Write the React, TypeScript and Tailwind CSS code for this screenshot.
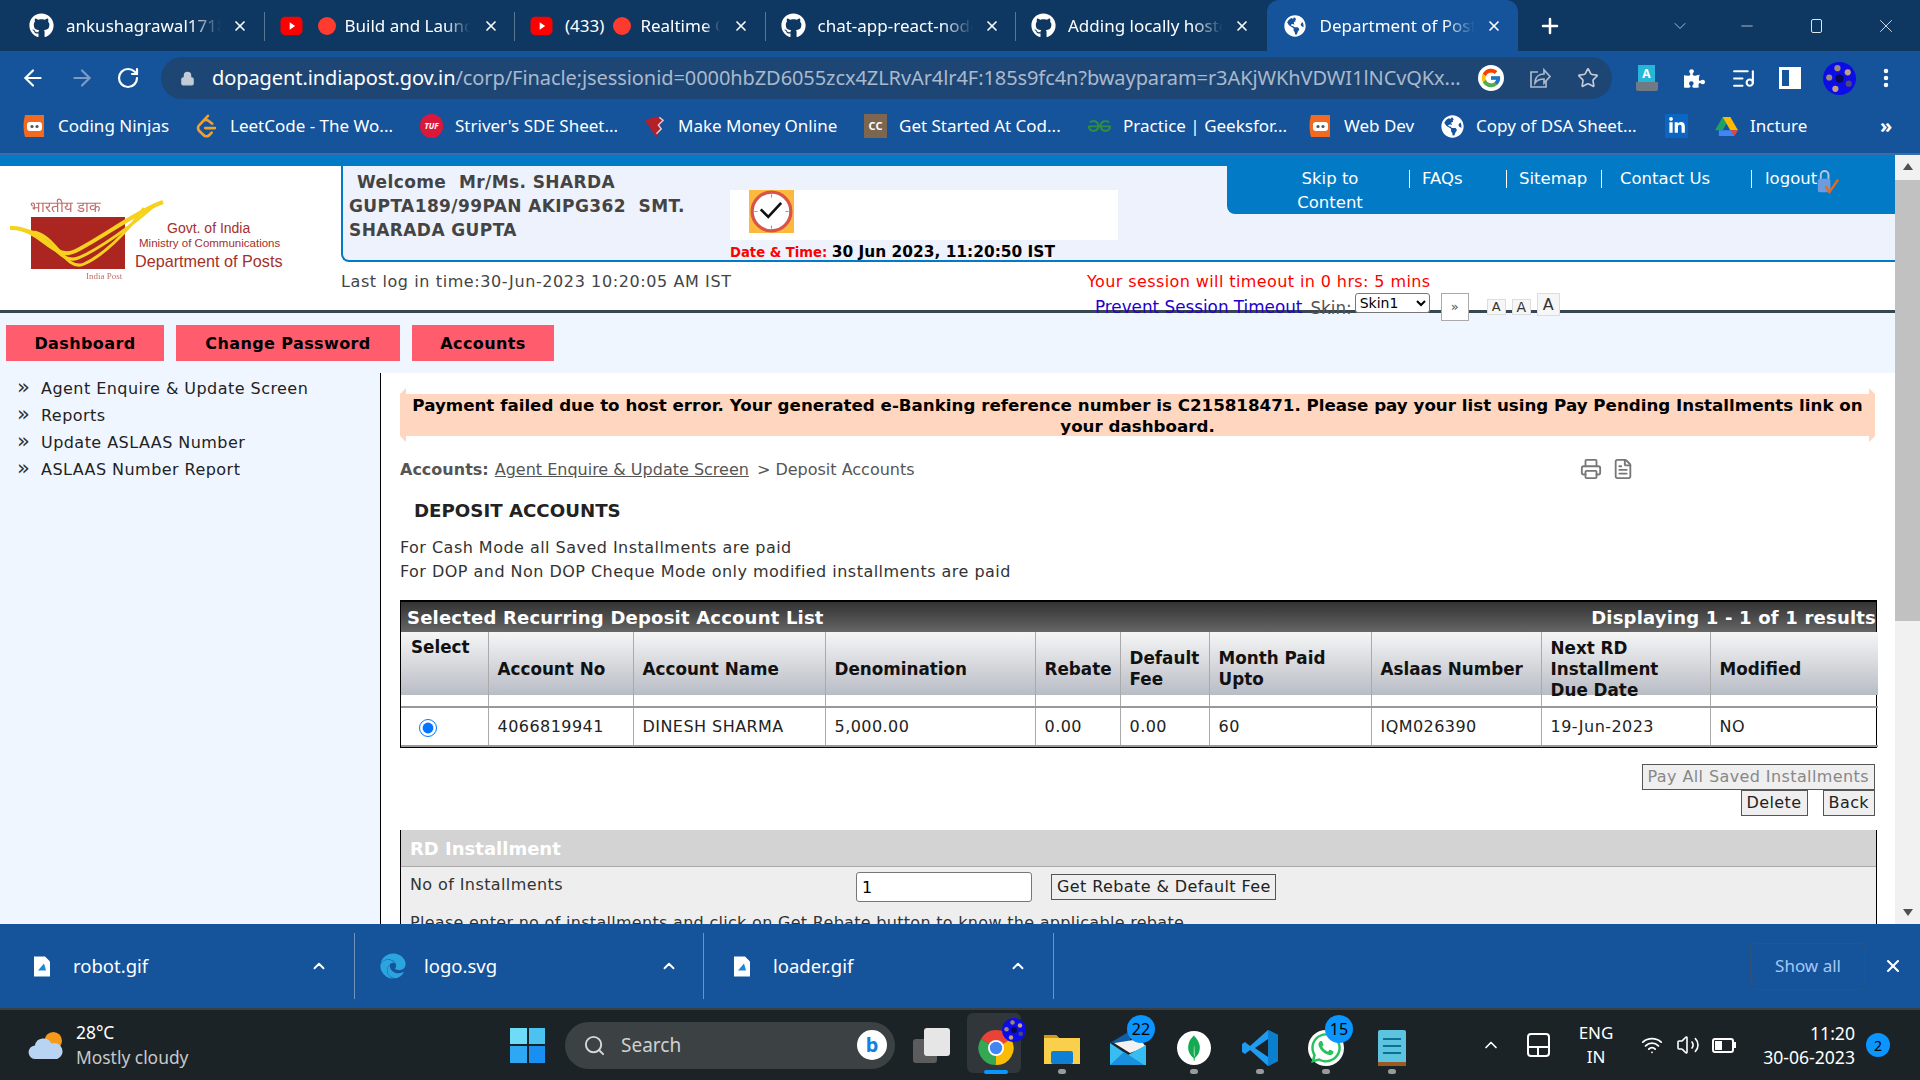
import type { ReactNode } from 'react';
import {
  ArrowLeft,
  ArrowRight,
  ChevronDown,
  ChevronUp,
  EllipsisVertical,
  FileText,
  ListMusic,
  Lock,
  Minus,
  Plus,
  Printer,
  RotateCw,
  Search,
  Star,
  Volume2,
  Wifi,
  X,
} from 'lucide-react';
import { FaEdge, FaGithub, FaGlobeAmericas, FaLinkedinIn, FaPuzzlePiece, FaWhatsapp } from 'react-icons/fa';
import { FcGoogle } from 'react-icons/fc';
import { SiGeeksforgeeks, SiLeetcode, SiMongodb } from 'react-icons/si';

const YouTubeIcon = () => (
  <svg viewBox="0 0 24 24" className="h-[22px] w-[23px] shrink-0">
    <rect x="0" y="2" width="24" height="20" rx="5" fill="#f00" />
    <path d="M10 8l6 4-6 4z" fill="#fff" />
  </svg>
);

const NinjaIcon = () => (
  <svg viewBox="0 0 24 24" className="h-[26px] w-[24px]">
    <path d="M3 1h19v22H3q-3-11 0-22z" fill="#f26a21" />
    <rect x="5" y="8" width="15" height="9" rx="3" fill="#fff" />
    <circle cx="10" cy="12.5" r="1.6" fill="#555" />
    <circle cx="15" cy="12.5" r="1.6" fill="#555" />
  </svg>
);

const DriveIcon = () => (
  <svg viewBox="0 0 24 22" className="h-[21px] w-[23px]">
    <path d="M8 1h8l-8 14H0z" fill="#1ea362" />
    <path d="M8 1h8l8 14h-8z" fill="#ffba00" />
    <path d="M4 15h20l-4 6H4z" fill="#4285f4" />
    <path d="M16 15h8l-4 6z" fill="#ea4335" />
  </svg>
);

const Avatar = ({ size }: { size: string }) => (
  <svg viewBox="0 0 32 32" className={size}>
    <circle cx="16" cy="16" r="16" fill="#0c0ce6" />
    <circle cx="16" cy="16" r="4" fill="#0a0a50" />
    <circle cx="14" cy="6" r="3" fill="#a08878" />
    <circle cx="24" cy="10" r="3" fill="#c0a080" />
    <circle cx="6" cy="15" r="3" fill="#a08878" />
    <circle cx="25" cy="21" r="3" fill="#504870" />
    <circle cx="12" cy="26" r="3" fill="#c0a080" />
  </svg>
);

const ShareIcon = () => (
  <svg viewBox="0 0 24 24" fill="none" stroke="#aab9cb" strokeWidth="1.7" className="ml-[24px] h-[24px] w-[24px] shrink-0">
    <path d="M10 6H3v15h15v-6" />
    <path d="M7 17c0-6 4-9 9-9V4l6 6.5-6 6.5v-4c-4 0-7 1-9 4z" />
  </svg>
);

const tabs = [
  { title: 'ankushagrawal1718', icon: 'github' },
  { title: 'Build and Launch', icon: 'yt', dot: true },
  { title: 'Realtime Chat', icon: 'yt', count: '(433)', dot: true },
  { title: 'chat-app-react-node', icon: 'github' },
  { title: 'Adding locally hosted', icon: 'github' },
];

const bookmarks: { name: string; w: string; icon: ReactNode }[] = [
  { name: 'Coding Ninjas', w: 'w-[173px]', icon: <NinjaIcon /> },
  { name: 'LeetCode - The Wo...', w: 'w-[225px]', icon: <SiLeetcode className="h-[24px] w-[23px] text-[#f0a030]" /> },
  {
    name: "Striver's SDE Sheet...",
    w: 'w-[223px]',
    icon: (
      <span className="flex h-[24px] w-[23px] items-center justify-center rounded-full bg-[#d9183b] text-[8px] font-bold italic text-white">
        TUF
      </span>
    ),
  },
  {
    name: 'Make Money Online',
    w: 'w-[221px]',
    icon: (
      <svg viewBox="0 0 24 24" className="h-[24px] w-[23px]">
        <path d="M2 6l12-4 6 2-6 20z" fill="#b3202a" />
        <path d="M17 3l4 3-5 5 3 4-5 5" fill="none" stroke="#f3c5c5" strokeWidth="1.5" />
      </svg>
    ),
  },
  {
    name: 'Get Started At Cod...',
    w: 'w-[224px]',
    icon: (
      <span className="flex h-[24px] w-[23px] items-center justify-center bg-[#7c6650] text-[11px] font-bold text-white">
        CC
      </span>
    ),
  },
  { name: 'Practice | Geeksfor...', w: 'w-[220px]', icon: <SiGeeksforgeeks className="h-[24px] w-[23px] text-[#2f8d46]" /> },
  { name: 'Web Dev', w: 'w-[133px]', icon: <NinjaIcon /> },
  { name: 'Copy of DSA Sheet...', w: 'w-[224px]', icon: <FaGlobeAmericas className="h-[23px] w-[23px] text-white" /> },
  {
    name: '',
    w: 'w-[50px]',
    icon: (
      <span className="flex h-[24px] w-[23px] items-center justify-center bg-[#0a66c2] text-white">
        <FaLinkedinIn className="h-[18px] w-[18px]" />
      </span>
    ),
  },
  { name: 'Incture', w: 'w-[90px]', icon: <DriveIcon /> },
];

const TabStrip = () => (
  <div className="flex h-[51px] shrink-0 items-end bg-[#0e3761] pl-[14px] text-white">
    {tabs.map((tab, i) => (
      <div key={tab.title} className="relative flex h-[51px] w-[250.5px] items-center pl-[15px]">
        {tab.icon === 'github' ? <FaGithub className="h-[25px] w-[25px] shrink-0" /> : <YouTubeIcon />}
        {tab.count && <span className="ml-[12px] text-[17px]">{tab.count}</span>}
        {tab.dot && <span className={`h-[18px] w-[18px] shrink-0 rounded-full bg-[#ff3b30] ${tab.count ? 'ml-[9px]' : 'ml-[15px]'}`} />}
        <span
          className={`${tab.dot ? 'ml-[9px]' : 'ml-[12px]'} overflow-hidden whitespace-nowrap text-[17px] [mask-image:linear-gradient(to_right,black_80%,transparent)] ${
            tab.count ? 'w-[80px]' : tab.dot ? 'w-[125px]' : 'w-[155px]'
          }`}
        >
          {tab.title}
        </span>
        <X className="absolute left-[218px] h-[16px] w-[16px]" strokeWidth={2.5} />
        {i < tabs.length - 1 && <span className="absolute right-0 top-[12px] h-[29px] w-px bg-[#5a7690]" />}
      </div>
    ))}
    <div className="relative flex h-[51px] w-[251px] items-center rounded-t-[12px] bg-[#15539b] pl-[17px]">
      <FaGlobeAmericas className="h-[22px] w-[22px] shrink-0" />
      <span className="ml-[14px] w-[155px] overflow-hidden whitespace-nowrap text-[17px] [mask-image:linear-gradient(to_right,black_80%,transparent)]">
        Department of Posts
      </span>
      <X className="absolute left-[219px] h-[16px] w-[16px]" strokeWidth={2.5} />
    </div>
    <div className="flex h-[51px] flex-1 items-center">
      <Plus className="ml-[20px] h-[24px] w-[24px]" strokeWidth={2.5} />
      <ChevronDown className="ml-[108px] h-[20px] w-[20px] text-[#c9d4e2]" strokeWidth={1} />
      <Minus className="ml-[48px] h-[18px] w-[18px] text-[#dfe6ee]" strokeWidth={1} />
      <span className="relative ml-[55px] h-[14px] w-[11px] rounded-[2px] border border-[#dfe6ee]" />
      <X className="ml-[53px] h-[22px] w-[22px] text-[#dfe6ee]" strokeWidth={1} />
    </div>
  </div>
);

const Toolbar = () => (
  <div className="flex h-[54px] shrink-0 items-center bg-[#15539b] text-white">
    <ArrowLeft className="ml-[20px] h-[26px] w-[26px]" strokeWidth={2} />
    <ArrowRight className="ml-[23px] h-[26px] w-[26px] text-[#7d9cc4]" strokeWidth={2} />
    <RotateCw className="ml-[21px] h-[24px] w-[24px]" strokeWidth={2.2} />
    <div className="ml-[21px] flex h-[42px] w-[1451px] items-center rounded-full bg-[#1e4675] pl-[19px]">
      <Lock className="h-[15px] w-[15px] text-[#c2cbd6]" fill="#c2cbd6" />
      <div className="ml-[17px] w-[1250px] overflow-hidden whitespace-nowrap text-[20px] tracking-[-0.08px] text-[#aab9cb]">
        <span className="text-white">dopagent.indiapost.gov.in</span>
        /corp/Finacle;jsessionid=0000hbZD6055zcx4ZLRvAr4lr4F:185s9fc4n?bwayparam=r3AKjWKhVDWI1lNCvQKx...
      </div>
      <span className="ml-[16px] flex h-[26px] w-[26px] shrink-0 items-center justify-center rounded-full bg-white">
        <FcGoogle className="h-[22px] w-[22px]" />
      </span>
      <ShareIcon />
      <Star className="ml-[25px] h-[22px] w-[22px] shrink-0 text-[#c2cbd6]" strokeWidth={1.8} />
    </div>
    <div className="ml-[23px] flex h-[26px] w-[23px] flex-col items-center">
      <span className="flex h-[17px] w-[17px] items-center justify-center bg-[#26b6d8] text-[12px] font-bold leading-none text-white">A</span>
      <span className="h-[9px] w-[22px] rounded-b-[2px] bg-[#6f7a85]" />
    </div>
    <FaPuzzlePiece className="ml-[26px] h-[21px] w-[21px]" />
    <ListMusic className="ml-[26px] h-[25px] w-[25px]" strokeWidth={2} />
    <span className="ml-[23px] flex h-[22px] w-[22px] justify-end border-[3px] border-white">
      <span className="h-full w-[9px] bg-white" />
    </span>
    <span className="ml-[22px]">
      <Avatar size="h-[33px] w-[33px]" />
    </span>
    <EllipsisVertical className="ml-[18px] h-[24px] w-[24px]" strokeWidth={2.5} />
  </div>
);

const BookmarksBar = () => (
  <div className="flex h-[50px] shrink-0 items-center border-b-2 border-[#3a6ea8] bg-[#15539b] pb-[6px] pl-[22px] text-[17px] text-white">
    {bookmarks.map(bm => (
      <div key={bm.w + bm.name} className={`flex shrink-0 items-center ${bm.w}`}>
        <span className="mr-[12px] flex shrink-0">{bm.icon}</span>
        {bm.name && <span className="whitespace-nowrap">{bm.name}</span>}
      </div>
    ))}
    <span className="ml-[75px] text-[20px] font-bold leading-none">»</span>
  </div>
);

const IndiaPostLogo = () => (
  <div className="relative h-full w-[341px] shrink-0 bg-white font-['Liberation_Sans',sans-serif] text-[#a5302a]">
    <span className="absolute left-[30px] top-[33px] text-[15px] leading-none opacity-70">भारतीय डाक</span>
    <svg viewBox="0 0 170 90" className="absolute left-[8px] top-[34px] h-[90px] w-[170px]">
      <rect x="23" y="17" width="94" height="52" fill="#ab2620" />
      <path d="M2 28C30 26 45 60 65 52S130 10 155 2" fill="none" stroke="#f6d21f" strokeWidth="4" />
      <path d="M14 30C40 30 50 66 70 58S125 25 148 4" fill="none" stroke="#f6d21f" strokeWidth="3" />
      <path d="M26 32C48 36 58 72 76 64S118 34 136 8" fill="none" stroke="#f6d21f" strokeWidth="3" />
    </svg>
    <span className="absolute left-[167px] top-[55px] text-[14px] leading-none">Govt. of India</span>
    <span className="absolute left-[139px] top-[72px] whitespace-nowrap text-[11.5px] leading-none">Ministry of Communications</span>
    <span className="absolute left-[135px] top-[87px] whitespace-nowrap text-[16.2px] leading-none">Department of Posts</span>
    <span className="absolute left-[86px] top-[106px] font-['Liberation_Serif',serif] text-[9px] leading-none opacity-70">India Post</span>
  </div>
);

const ClockIcon = () => (
  <div className="flex h-[43px] w-[45px] items-center justify-center bg-[#fdb93d]">
    <svg viewBox="0 0 40 40" className="h-[43px] w-[43px]">
      <circle cx="20" cy="20" r="18" fill="#fff" stroke="#d9534a" strokeWidth="3" />
      <path d="M10 18l7 7L29 12" fill="none" stroke="#111" strokeWidth="2.5" />
      <path d="M20 4v3M20 33v3M4 20h3M33 20h3" stroke="#999" strokeWidth="1" />
    </svg>
  </div>
);

const BlueTabLinks = () => (
  <div className="absolute right-0 top-0 flex h-[48px] w-[668px] items-start rounded-bl-lg bg-[#037ac6] pl-[63px] pt-[1px] text-[16.5px] leading-[24px] text-white">
    <span className="w-[80px] text-center">Skip to Content</span>
    <div className="ml-[39px] flex">
      <span className="mt-[3px] h-[18px] w-[97px] border-l border-white pl-[12px] leading-[18px]">FAQs</span>
      <span className="mt-[3px] h-[18px] w-[95px] border-l border-white pl-[12px] leading-[18px]">Sitemap</span>
      <span className="mt-[3px] h-[18px] w-[150px] border-l border-white pl-[18px] leading-[18px]">Contact Us</span>
      <span className="mt-[3px] h-[18px] w-[64px] border-l border-white pl-[13px] leading-[18px]">logout</span>
    </div>
    <svg viewBox="0 0 26 28" className="-ml-[1px] mt-[2px] h-[27px] w-[27px]">
      <rect x="3" y="10" width="13" height="14" rx="2" fill="#6d9be0" />
      <path d="M6 10V6a4 4 0 018 0v4" fill="none" stroke="#b9c8dc" strokeWidth="2" />
      <path d="M11 18l4 6 9-13" fill="none" stroke="#e86a1c" strokeWidth="2.5" />
    </svg>
  </div>
);

const HeaderBar = () => (
  <>
    <div className="h-[11px] shrink-0 bg-[#037ac6]" />
    <div className="flex h-[144px] shrink-0 bg-white text-[#444]">
      <IndiaPostLogo />
      <div className="relative min-w-0 flex-1">
        <div className="relative flex h-[96px] rounded-bl-lg border-b-2 border-l-2 border-[#037ac6] bg-[#eef2fd]">
          <div className="w-[387px] shrink-0 pl-[6px] pt-[4px] text-[17px] font-bold leading-[24px] tracking-[0.4px] text-[#444]">
            <div className="pl-[8px]">Welcome&nbsp; Mr/Ms. SHARDA</div>
            <div className="whitespace-nowrap">GUPTA189/99PAN AKIPG362&nbsp; SMT.</div>
            <div>SHARADA GUPTA</div>
          </div>
          <div className="flex flex-col pt-[24px]">
            <div className="h-[51px] w-[388px] bg-white pl-[19px]">
              <ClockIcon />
            </div>
            <div className="whitespace-nowrap pt-[5px] text-[15.4px] font-bold leading-[15px] text-black">
              <span className="text-[13.2px] text-[#f00]">Date &amp; Time: </span>
              30 Jun 2023, 11:20:50 IST
            </div>
          </div>
          <BlueTabLinks />
        </div>
        <div className="flex pt-[11px] text-[16px] leading-[18px]">
          <span className="w-[746px] whitespace-nowrap tracking-[0.6px]">Last log in time:30-Jun-2023 10:20:05 AM IST</span>
          <span className="whitespace-nowrap tracking-[0.4px] text-[#f00]">Your session will timeout in 0 hrs: 5 mins</span>
        </div>
        <div className="absolute left-[754px] top-[127px] z-10 flex items-start whitespace-nowrap text-[16.8px] leading-[18px]">
          <span className="mt-[5px] text-[#2200cc]">Prevent Session Timeout</span>
          <span className="ml-[8px] mt-[6px] text-[#555]">Skin:</span>
          <select
            defaultValue="Skin1"
            className="ml-[3px] h-[20px] w-[75px] rounded-[3px] border border-[#777] bg-white text-[14px] leading-none text-black"
          >
            <option>Skin1</option>
          </select>
          <span className="ml-[11px] flex h-[28px] w-[28px] items-center justify-center border border-[#aaa] bg-white text-[13px] text-[#555]">»</span>
          <span className="ml-[18px] mt-[6px] flex h-[16px] w-[19px] items-center justify-center border border-[#ddd] bg-[#f6f6f6] text-[13px] text-[#333]">A</span>
          <span className="ml-[6px] mt-[6px] flex h-[16px] w-[19px] items-center justify-center border border-[#ddd] bg-[#f6f6f6] text-[14px] text-[#333]">A</span>
          <span className="ml-[6px] flex h-[23px] w-[23px] items-center justify-center border border-[#ddd] bg-[#f6f6f6] text-[16px] text-[#333]">A</span>
        </div>
      </div>
    </div>
    <div className="h-[3px] shrink-0 bg-[#37474f]" />
    <nav className="flex h-[60px] shrink-0 items-start gap-[12px] bg-[#eff6ff] pl-[6px] pt-[12px] text-[16px] font-bold tracking-[0.4px] text-black">
      <a className="flex h-[36px] w-[158px] items-center justify-center bg-[#ff5c6e] pt-[2px]">Dashboard</a>
      <a className="flex h-[36px] w-[224px] items-center justify-center bg-[#ff5c6e] pt-[2px]">Change Password</a>
      <a className="flex h-[36px] w-[142px] items-center justify-center bg-[#ff5c6e] pt-[2px]">Accounts</a>
    </nav>
  </>
);

const sideLinks = ['Agent Enquire & Update Screen', 'Reports', 'Update ASLAAS Number', 'ASLAAS Number Report'];

const Sidebar = () => (
  <aside className="w-[381px] shrink-0 border-r border-black bg-[#eff6ff] pt-[2px] text-[16px] leading-[27px] tracking-[0.45px] text-[#222]">
    {sideLinks.map(link => (
      <div key={link} className="flex">
        <span className="ml-[17px] w-[24px] text-[21px] leading-[25px] text-[#333]">»</span>
        <span>{link}</span>
      </div>
    ))}
  </aside>
);

const columns = [
  { lines: ['Select'], value: '', w: 'w-[87px]' },
  { lines: ['Account No'], value: '4066819941', w: 'w-[145px]' },
  { lines: ['Account Name'], value: 'DINESH SHARMA', w: 'w-[192px]' },
  { lines: ['Denomination'], value: '5,000.00', w: 'w-[210px]' },
  { lines: ['Rebate'], value: '0.00', w: 'w-[85px]' },
  { lines: ['Default', 'Fee'], value: '0.00', w: 'w-[89px]' },
  { lines: ['Month Paid', 'Upto'], value: '60', w: 'w-[162px]' },
  { lines: ['Aslaas Number'], value: 'IQM026390', w: 'w-[170px]' },
  { lines: ['Next RD', 'Installment', 'Due Date'], value: '19-Jun-2023', w: 'w-[169px]' },
  { lines: ['Modified'], value: 'NO', w: 'w-[168px]' },
];

const AccountTable = () => (
  <div className="mt-[16px] w-[1477px] border-x border-b border-black">
    <div className="flex h-[32px] items-center justify-between border-t-2 border-black bg-gradient-to-b from-[#333] to-[#666] pl-[6px] text-[18px] font-bold tracking-[0.2px] text-white">
      <span>Selected Recurring Deposit Account List</span>
      <span>Displaying 1 - 1 of 1 results</span>
    </div>
    <table className="w-full table-fixed border-collapse text-[16px] tracking-[0.45px] text-[#222]">
      <thead>
        <tr className="h-[75px]">
          {columns.map((col, i) => (
            <th
              key={col.lines[0]}
              className={`${col.w} whitespace-nowrap border-l border-[#aaa] bg-[linear-gradient(#f6f6f6,#b8bcc5)] bg-[length:100%_63px] bg-no-repeat px-[9px] text-left text-[16.8px] font-bold leading-[21px] tracking-normal text-[#111] first:border-l-0 ${
                i === 0 ? 'pl-[10px] pt-[5px] align-top' : 'align-middle'
              }`}
            >
              {col.lines.map(line => (
                <div key={line}>{line}</div>
              ))}
            </th>
          ))}
        </tr>
      </thead>
      <tbody>
        <tr className="h-[39px] border-y-2 border-[#999]">
          {columns.map((col, i) => (
            <td key={col.lines[0]} className="border-l border-[#aaa] px-[9px] first:border-l-0">
              {i === 0 ? <input type="radio" defaultChecked className="ml-[9px] mt-[2px] block h-[18px] w-[18px] accent-[#0075ff]" /> : col.value}
            </td>
          ))}
        </tr>
      </tbody>
    </table>
  </div>
);

const GreyButton = ({ children, muted, className }: { children: ReactNode; muted?: boolean; className?: string }) => (
  <button
    type="button"
    className={`h-[26px] whitespace-nowrap border border-[#555] bg-[#efefef] px-[5px] text-[16px] leading-none tracking-[0.4px] ${muted ? 'text-[#888]' : 'text-[#222]'} ${className ?? ''}`}
  >
    {children}
  </button>
);

const DepositContent = () => (
  <main className="min-w-0 flex-1 overflow-hidden bg-white pl-[19px] text-[16px] text-[#555]">
    <div className="mt-[15px] flex h-[54px] w-[1475px] flex-col justify-center bg-[#ffd6bf] px-[5px] pt-[2px] text-center text-[16.7px] font-bold leading-[21px] text-black [clip-path:polygon(6px_0,6px_6px,1469px_6px,1469px_0,1475px_6px,1475px_48px,1469px_54px,1469px_48px,6px_48px,6px_54px,0_48px,0_6px)]">
      Payment failed due to host error. Your generated e-Banking reference number is C215818471. Please pay your list using Pay Pending Installments link on your dashboard.
    </div>
    <div className="mt-[16px] flex h-[24px] w-[1234px] items-center">
      <span className="font-bold">Accounts:</span>
      <span className="ml-[6px] underline">Agent Enquire &amp; Update Screen</span>
      <span className="ml-[8px]">&gt; Deposit Accounts</span>
      <Printer className="-mt-[3px] ml-auto h-[22px] w-[22px] text-[#777]" />
      <FileText className="-mt-[3px] ml-[10px] h-[22px] w-[22px] text-[#777]" />
    </div>
    <h2 className="mt-[17px] pl-[14px] text-[18.2px] font-bold leading-[24px] text-[#222]">DEPOSIT ACCOUNTS</h2>
    <p className="mt-[13px] leading-[24px] tracking-[0.47px] text-[#333]">
      For Cash Mode all Saved Installments are paid
      <br />
      For DOP and Non DOP Cheque Mode only modified installments are paid
    </p>
    <AccountTable />
    <div className="mt-[16px] flex w-[1475px] flex-col items-end">
      <GreyButton muted>Pay All Saved Installments</GreyButton>
      <div className="flex gap-[15px]">
        <GreyButton>Delete</GreyButton>
        <GreyButton>Back</GreyButton>
      </div>
    </div>
    <section className="mt-[14px] h-[100px] w-[1477px] border-x border-black bg-[#eeeeee]">
      <div className="flex h-[37px] items-center border-b border-[#aaa] bg-[#d3d3d3] pl-[9px] text-[18px] font-bold text-white">RD Installment</div>
      <div className="flex h-[36px] items-start">
        <span className="mt-[7px] w-[455px] pl-[9px] leading-[22px] tracking-[0.4px] text-[#333]">No of Installments</span>
        <input defaultValue="1" className="mt-[5px] h-[30px] w-[176px] rounded-[3px] border border-[#777] bg-white px-[5px] text-[16px] text-black" />
        <GreyButton className="ml-[19px] mt-[7px] w-[225px]">Get Rebate &amp; Default Fee</GreyButton>
      </div>
      <div className="whitespace-nowrap pl-[9px] pt-[9px] leading-[22px] tracking-[0.3px] text-[#333]">
        Please enter no of installments and click on Get Rebate button to know the applicable rebate
      </div>
    </section>
  </main>
);

const Scrollbar = () => (
  <div className="flex w-[25px] shrink-0 flex-col items-center bg-[#f1f1f1] py-[8px]">
    <span className="h-0 w-0 border-x-[5px] border-b-[7px] border-x-transparent border-b-[#505050]" />
    <span className="mt-[10px] h-[441px] w-full bg-[#c1c1c1]" />
    <span className="mt-auto h-0 w-0 border-x-[5px] border-t-[7px] border-x-transparent border-t-[#505050]" />
  </div>
);

const FileGlyph = () => (
  <svg viewBox="0 0 18 22" className="h-[23px] w-[18px] shrink-0">
    <path d="M1 1h11l5 5v15H1z" fill="#fff" />
    <path d="M5 15l6-7 2 7z" fill="#1a86d8" />
  </svg>
);

const downloads = [
  { name: 'robot.gif', icon: <FileGlyph />, w: 'w-[355px]', pl: 'pl-[33px]', gap: 'ml-[22px]', chev: 'left-[310px]' },
  { name: 'logo.svg', icon: <FaEdge className="h-[26px] w-[26px] shrink-0 text-[#2aa5df]" />, w: 'w-[349px]', pl: 'pl-[25px]', gap: 'ml-[18px]', chev: 'left-[305px]' },
  { name: 'loader.gif', icon: <FileGlyph />, w: 'w-[350px]', pl: 'pl-[29px]', gap: 'ml-[22px]', chev: 'left-[305px]' },
];

const DownloadsBar = () => (
  <div className="flex h-[84px] shrink-0 items-center bg-[#15539b] text-white">
    {downloads.map(d => (
      <div key={d.name} className={`relative flex h-[66px] items-center border-r border-[#6f93bd] ${d.w} ${d.pl}`}>
        {d.icon}
        <span className={`${d.gap} text-[18.5px]`}>{d.name}</span>
        <ChevronUp className={`absolute ${d.chev} h-[18px] w-[18px]`} strokeWidth={2.5} />
      </div>
    ))}
    <button type="button" className="ml-[696px] h-[47px] w-[116px] rounded-[6px] border border-[#33527a] text-[17px] text-[#a5c8f5]">
      Show all
    </button>
    <X className="ml-[17px] h-[20px] w-[20px]" strokeWidth={2.5} />
  </div>
);

const WindowsLogo = () => (
  <div className="grid h-[35px] w-[35px] shrink-0 grid-cols-2 gap-[2px]">
    <span className="bg-[#6fdcf7]" />
    <span className="bg-[#4cc2f1]" />
    <span className="bg-[#2fa8f4]" />
    <span className="bg-[#1a8ff2]" />
  </div>
);

const BadgeDot = ({ text, className }: { text: string; className: string }) => (
  <span className={`absolute flex h-[28px] w-[28px] items-center justify-center rounded-full bg-[#0a95ff] text-[16px] text-black ${className}`}>{text}</span>
);

const ChromeLogo = () => (
  <svg viewBox="0 0 36 36" className="h-[36px] w-[36px]">
    <path d="M18 18L3 9A17 17 0 0133 9z" fill="#ea4335" />
    <path d="M18 18L3 9A17 17 0 0018 35z" fill="#34a853" />
    <path d="M18 18L33 9A17 17 0 0118 35z" fill="#fbbc05" />
    <circle cx="18" cy="18" r="8" fill="#fff" />
    <circle cx="18" cy="18" r="6.2" fill="#4285f4" />
  </svg>
);

const taskApps: { key: string; icon: ReactNode; badge?: string; dot?: boolean }[] = [
  {
    key: 'folder',
    dot: true,
    icon: (
      <svg viewBox="0 0 36 32" className="h-[32px] w-[36px]">
        <path d="M0 3h12l3 3h21v26H0z" fill="#f9cf4b" />
        <path d="M0 3h12l3 3H0z" fill="#d19a12" />
        <rect x="7" y="19" width="22" height="13" rx="2" fill="#0f7fd4" />
      </svg>
    ),
  },
  {
    key: 'mail',
    badge: '22',
    icon: (
      <svg viewBox="0 0 36 34" className="h-[34px] w-[36px]">
        <path d="M0 12L20 0v10z" fill="#0f5ea8" />
        <path d="M4 12l26-4 6 8-16 6z" fill="#f2f2f2" />
        <path d="M0 12l18 12 18-10v20H0z" fill="#36bdf2" />
        <path d="M0 34l14-13 20 13z" fill="#1a8fdc" />
      </svg>
    ),
  },
  {
    key: 'mongo',
    dot: true,
    icon: (
      <span className="flex h-[34px] w-[34px] items-center justify-center rounded-full bg-white">
        <SiMongodb className="h-[26px] w-[26px] text-[#13aa52]" />
      </span>
    ),
  },
  {
    key: 'vscode',
    dot: true,
    icon: (
      <svg viewBox="0 0 36 36" className="h-[36px] w-[36px]">
        <path d="M26 0l10 5v26l-10 5L8 20l-5 4-3-2V14l3-2 5 4z" fill="#1f9cf0" />
        <path d="M26 9L13 18l13 9z" fill="#1c2226" />
        <path d="M26 0l10 5v26l-10 5z" fill="#0a7fd0" />
      </svg>
    ),
  },
  {
    key: 'whatsapp',
    badge: '15',
    dot: true,
    icon: (
      <span className="flex h-[36px] w-[36px] items-center justify-center rounded-full bg-white">
        <FaWhatsapp className="h-[34px] w-[34px] text-[#25c35b]" />
      </span>
    ),
  },
  {
    key: 'notepad',
    dot: true,
    icon: (
      <div className="flex h-[36px] w-[28px] flex-col justify-center gap-[5px] rounded-t-[2px] border-b-[4px] border-[#9a5a20] bg-[#5cc4df] px-[5px]">
        <span className="h-[2px] bg-[#0d6f96]" />
        <span className="h-[2px] bg-[#0d6f96]" />
        <span className="h-[2px] bg-[#0d6f96]" />
      </div>
    ),
  },
];

const Taskbar = () => (
  <div className="flex h-[72px] shrink-0 items-center border-t-2 border-[#3a3f44] bg-[#1c2327] text-white">
    <svg viewBox="0 0 38 32" className="ml-[28px] h-[31px] w-[37px] shrink-0">
      <circle cx="26" cy="11" r="9" fill="#f59a1b" />
      <path d="M8 30a7 7 0 01-1-14 9 9 0 0117-2 8 8 0 016 16z" fill="#b9d3f2" />
    </svg>
    <div className="ml-[11px] w-[434px] text-[17.4px] leading-[25px]">
      <div>28°C</div>
      <div className="text-[#c9c9c9]">Mostly cloudy</div>
    </div>
    <WindowsLogo />
    <div className="ml-[20px] flex h-[47px] w-[330px] shrink-0 items-center rounded-full bg-[#3c4243] pl-[18px]">
      <Search className="h-[23px] w-[23px] text-[#d7d7d7]" strokeWidth={2} />
      <span className="ml-[15px] text-[19px] text-[#d0d0d0]">Search</span>
      <span className="ml-auto mr-[8px] flex h-[30px] w-[30px] items-center justify-center rounded-full bg-white text-[20px] font-bold text-[#1281e0]">b</span>
    </div>
    <div className="relative ml-[18px] h-[35px] w-[37px] shrink-0">
      <span className="absolute bottom-0 left-0 h-[24px] w-[24px] rounded-[3px] bg-[#5c5c5c]" />
      <span className="absolute right-0 top-0 h-[28px] w-[26px] rounded-[3px] bg-[#e6e6e6]" />
    </div>
    <div className="ml-[13px] flex">
      <div className="relative flex h-[70px] w-[66px] items-center justify-center">
        <span className="absolute left-[4px] top-[3px] h-[60px] w-[54px] rounded-[6px] bg-[#30363a]" />
        <span className="relative mt-[6px]">
          <ChromeLogo />
        </span>
        <span className="absolute left-[39px] top-[8px]">
          <Avatar size="h-[24px] w-[24px]" />
        </span>
        <span className="absolute bottom-[6px] left-[21px] h-[4px] w-[24px] rounded-full bg-[#0a95ff]" />
      </div>
      {taskApps.map(app => (
        <div key={app.key} className="relative flex h-[70px] w-[66px] items-center justify-center pt-[5px]">
          {app.icon}
          {app.badge && <BadgeDot text={app.badge} className="left-[32px] top-[5px]" />}
          {app.dot && <span className="absolute bottom-[6px] left-[29px] h-[5px] w-[8px] rounded-full bg-[#9a9a9a]" />}
        </div>
      ))}
    </div>
    <ChevronUp className="ml-[56px] h-[20px] w-[20px]" strokeWidth={2} />
    <div className="ml-[26px] grid h-[24px] w-[23px] grid-cols-2 grid-rows-[2fr_1fr] overflow-hidden rounded-[4px] border-2 border-white">
      <span className="col-span-2 border-b-2 border-white" />
      <span className="border-r-2 border-white" />
    </div>
    <div className="ml-[21px] w-[50px] text-center text-[17px] leading-[24px]">
      <div>ENG</div>
      <div>IN</div>
    </div>
    <Wifi className="ml-[20px] h-[22px] w-[22px]" strokeWidth={2} />
    <Volume2 className="ml-[13px] h-[24px] w-[24px]" strokeWidth={1.6} />
    <span className="ml-[12px] flex h-[15px] w-[22px] items-center rounded-[3px] border-2 border-white p-[1px]">
      <span className="h-full w-[7px] bg-white" />
    </span>
    <span className="h-[6px] w-[2px] bg-white" />
    <div className="ml-[23px] w-[96px] whitespace-nowrap text-right text-[17.6px] leading-[24px]">
      <div>11:20</div>
      <div>30-06-2023</div>
    </div>
    <span className="ml-[11px] flex h-[24px] w-[24px] items-center justify-center rounded-full bg-[#0a95ff] text-[14px] text-black">2</span>
  </div>
);

const App = () => (
  <div className="flex h-[1080px] w-[1920px] flex-col overflow-hidden font-['Noto_Sans',sans-serif]">
    <TabStrip />
    <Toolbar />
    <BookmarksBar />
    <div className="flex h-[769px] shrink-0 overflow-hidden">
      <div className="flex min-w-0 flex-1 flex-col font-['DejaVu_Sans',sans-serif]">
        <HeaderBar />
        <div className="flex min-h-0 flex-1">
          <Sidebar />
          <DepositContent />
        </div>
      </div>
      <Scrollbar />
    </div>
    <DownloadsBar />
    <Taskbar />
  </div>
);

export default App;
